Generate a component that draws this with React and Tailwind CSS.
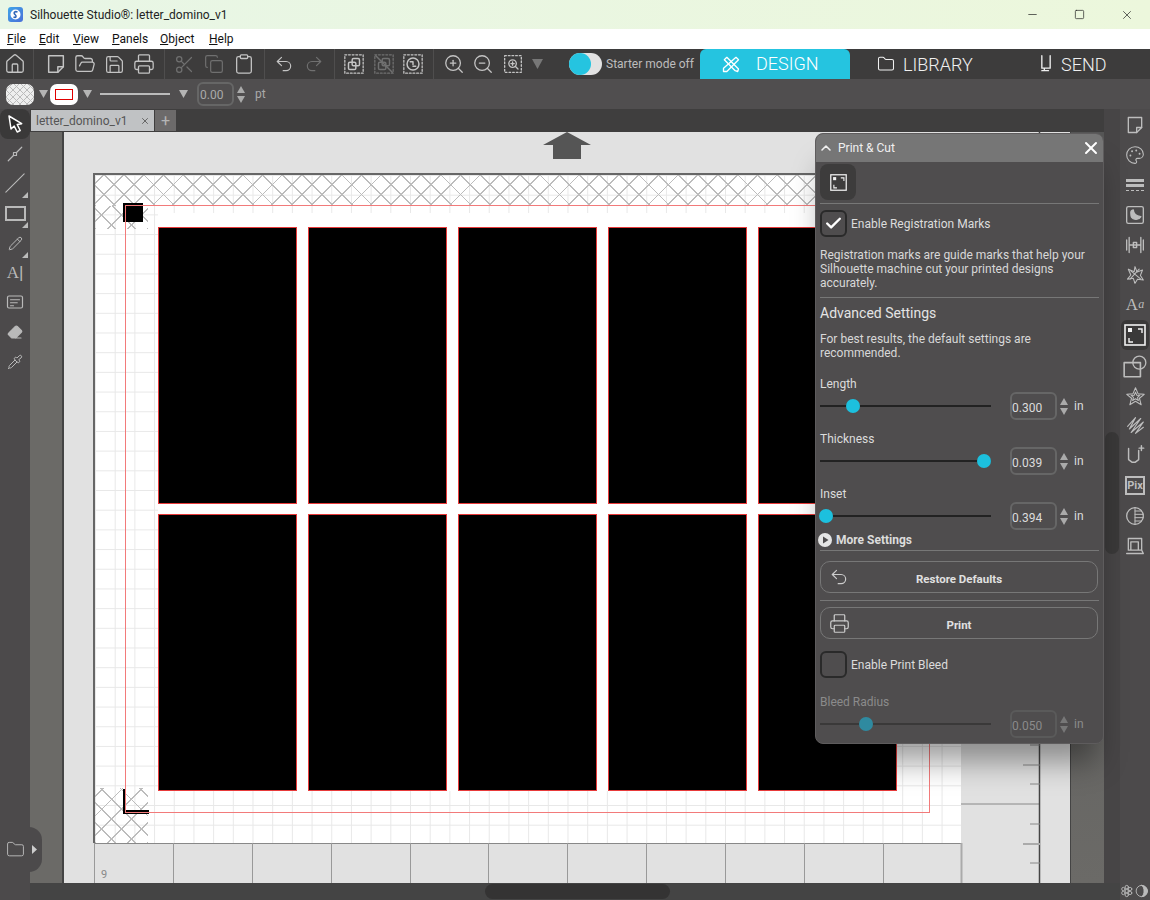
import {
  House, FolderOpen, Save, Printer, Scissors, Copy, Clipboard, Undo2, Redo2, ZoomIn, ZoomOut,
  Folder, Palette, Check, X, ChevronUp, Minus, Square, Eraser, Pipette, Pencil,
} from 'lucide-react';

const MENU = [
  ['F', 'ile', 'w-[32px]'],
  ['E', 'dit', 'w-[34px]'],
  ['V', 'iew', 'w-[39px]'],
  ['P', 'anels', 'w-[48px]'],
  ['O', 'bject', 'w-[49px]'],
  ['H', 'elp', 'w-[40px]'],
];

const CARDS = Array.from({ length: 10 }, (_, i) => i);

function Svg({ children, size = 22, className = '' }) {
  return (
    <svg viewBox="0 0 24 24" width={size} height={size} fill="none" stroke="currentColor" strokeWidth="1.6" strokeLinecap="round" strokeLinejoin="round" className={className}>
      {children}
    </svg>
  );
}

function TriDown({ className = '' }) {
  return (
    <svg width="9" height="8" viewBox="0 0 9 8" className={className}>
      <path d="M0 0h9L4.5 8z" fill="currentColor" />
    </svg>
  );
}

function Spinner({ dim }) {
  return (
    <div className={`flex flex-col gap-[3px] items-center w-[8px] ${dim ? 'text-[#777]' : 'text-[#aaa]'}`}>
      <svg width="8" height="7" viewBox="0 0 8 7"><path d="M0 7h8L4 0z" fill="currentColor" /></svg>
      <svg width="8" height="7" viewBox="0 0 8 7"><path d="M0 0h8L4 7z" fill="currentColor" /></svg>
    </div>
  );
}

function Corner() {
  return <span className="absolute right-0 bottom-0 w-0 h-0 border-l-[6px] border-l-transparent border-b-[6px] border-b-[#bbb]" />;
}

function NewPage({ size = 22 }) {
  return (
    <Svg size={size}>
      <path d="M4 3h16v12l-6 6H4z" />
      <path d="M14 21v-6h6" />
    </Svg>
  );
}

function GroupIcon({ off, round }) {
  return (
    <Svg>
      <rect x="2" y="2" width="20" height="20" strokeDasharray="2 2" strokeWidth="1.4" />
      {round ? (
        <>
          <circle cx="12" cy="12" r="6.5" />
          <path d="M9 9.5h3v3M15 14.5h-3" />
        </>
      ) : (
        <>
          <rect x="10" y="6" width="8" height="8" rx="1.5" />
          <rect x="6" y="10" width="8" height="8" rx="1.5" />
        </>
      )}
      {off && <path d="M3 3l18 18" />}
    </Svg>
  );
}

function ZoomSel() {
  return (
    <Svg size={20}>
      <rect x="2" y="2" width="20" height="20" strokeDasharray="2 2.4" strokeWidth="1.6" />
      <circle cx="11.5" cy="11.5" r="4.5" />
      <path d="M15 15l3 3M9.5 11.5h4M11.5 9.5v4" />
    </Svg>
  );
}

function RegIcon({ size = 22 }) {
  return (
    <svg width={size} height={size} viewBox="0 0 22 22">
      <rect x="1" y="1" width="20" height="20" fill="none" stroke="#f2f2f2" strokeWidth="1.6" />
      <rect x="4" y="4" width="4" height="4" fill="#f2f2f2" />
      <path d="M14 5h4v4M5 14v4h4" fill="none" stroke="#f2f2f2" strokeWidth="1.4" />
    </svg>
  );
}

function TopBtn({ children, dim }) {
  return <div className={`w-[29.5px] h-full flex items-center justify-center ${dim ? 'text-[#707070]' : 'text-[#c4c4c4]'}`}>{children}</div>;
}

function Sep() {
  return <div className="w-px h-full bg-[#4f4e4e] mx-[5px]" />;
}

function TopToolbar() {
  return (
    <div className="h-[30px] bg-[#3d3c3c] flex items-stretch">
      <div className="w-[30px] flex items-center justify-center text-[#c4c4c4]"><House size={22} strokeWidth={1.4} /></div>
      <div className="w-px bg-[#4f4e4e] ml-[3px] mr-[7px]" />
      <TopBtn><NewPage /></TopBtn>
      <TopBtn><FolderOpen size={22} strokeWidth={1.4} /></TopBtn>
      <TopBtn><Save size={21} strokeWidth={1.4} /></TopBtn>
      <TopBtn><Printer size={22} strokeWidth={1.4} /></TopBtn>
      <Sep />
      <TopBtn dim><Scissors size={21} strokeWidth={1.4} /></TopBtn>
      <TopBtn dim><Copy size={20} strokeWidth={1.4} /></TopBtn>
      <TopBtn><Clipboard size={22} strokeWidth={1.4} /></TopBtn>
      <Sep />
      <TopBtn><Undo2 size={20} strokeWidth={1.4} /></TopBtn>
      <TopBtn dim><Redo2 size={20} strokeWidth={1.4} /></TopBtn>
      <Sep />
      <TopBtn><GroupIcon /></TopBtn>
      <TopBtn dim><GroupIcon off /></TopBtn>
      <TopBtn><GroupIcon round /></TopBtn>
      <Sep />
      <TopBtn><ZoomIn size={22} strokeWidth={1.4} /></TopBtn>
      <TopBtn><ZoomOut size={22} strokeWidth={1.4} /></TopBtn>
      <TopBtn><ZoomSel /></TopBtn>
      <div className="flex items-center ml-[4px] text-[#777]">
        <svg width="11" height="10" viewBox="0 0 11 10"><path d="M0 0h11L5.500 10z" fill="currentColor" /></svg>
      </div>
      <div className="ml-[26.5px] flex items-center">
        <div className="w-[33px] h-[22px] rounded-full bg-[#e2e2e2]">
          <div className="w-[22px] h-[22px] rounded-full bg-[#25c4e0]" />
        </div>
        <span className="ml-[4px] w-[94px] text-[12px] text-[#bdbdbd] whitespace-nowrap">Starter mode off</span>
      </div>
      <div className="w-[150px] bg-[#25c4e0] rounded-t-[6px] flex items-center text-white pl-[21px] text-[18px] leading-none font-light">
        <Svg size={20} className="mr-[14px]">
          <path d="M4 7l3-3 14 14-1 3-3-1z" />
          <path d="M18 4l3 3L7 21l-4 0 0-4z" />
        </Svg>
        <span className="ml-px">DESIGN</span>
      </div>
      <div className="w-[170px] flex items-center text-[#f0f0f0] pl-[27px] text-[18px] font-light">
        <Folder size={18} strokeWidth={1.4} className="mr-[8px]" />
        <span>LIBRARY</span>
      </div>
      <div className="flex items-center text-[#f0f0f0] pl-[16px] text-[18px] font-light">
        <Svg size={20} className="mr-[5px]">
          <path d="M7 2v15h10V2M7 20h8M10 17v3" />
        </Svg>
        <span>SEND</span>
      </div>
    </div>
  );
}

function OptionBar() {
  return (
    <div className="h-[30px] bg-[#504e4f] flex items-center text-[#b5b5b5]">
      <div className="ml-[6px] w-[28px] h-[21px] rounded-[7px] bg-[#eee] bg-[repeating-linear-gradient(45deg,#bbb_0_1px,transparent_1px_5px),repeating-linear-gradient(-45deg,#bbb_0_1px,transparent_1px_5px)]" />
      <TriDown className="ml-[5px]" />
      <div className="ml-[2px] w-[28px] h-[21px] rounded-[7px] bg-white flex items-center justify-center">
        <div className="w-[18px] h-[11px] border border-[#e00000]" />
      </div>
      <TriDown className="ml-[5px]" />
      <div className="ml-[8px] w-[70px] h-[2px] bg-[#bbb]" />
      <TriDown className="ml-[9px]" />
      <div className="ml-[9px] w-[37px] h-[24px] border-2 border-[#666] rounded-md flex items-center pl-[1px] pt-px text-[12px] text-[#aaa]">0.00</div>
      <div className="ml-[3px]"><Spinner /></div>
      <span className="ml-[10px] text-[12px] text-[#aaa]">pt</span>
    </div>
  );
}

function LeftRail() {
  return (
    <div className="w-[30px] bg-[#4c4a4b] flex flex-col items-center text-[#b9b9b9] relative z-10">
      <div className="w-[30px] h-[30px] rounded-lg bg-[#3a3939] flex items-center justify-center text-white">
        <svg width="18" height="20" viewBox="0 0 18 20">
          <path d="M3 2l2 13 3.200-3 3 6 3-1.500-3-6 4.500-.8z" fill="#2a2a2a" stroke="#fff" strokeWidth="1.500" strokeLinejoin="round" />
        </svg>
      </div>
      <div className="h-[29px] flex items-center">
        <Svg size={18}>
          <path d="M3 21L10 14M14 10l7-7" />
          <rect x="10" y="10" width="4" height="4" />
        </Svg>
      </div>
      <div className="h-[30px] w-[26px] flex items-center justify-center relative">
        <Svg size={22} className="stroke-[1.2]"><path d="M2 22L22 2" /></Svg>
        <Corner />
      </div>
      <div className="h-[30px] w-[26px] flex items-center justify-center relative">
        <div className="w-[21px] h-[15px] border-2 border-[#b9b9b9]" />
        <Corner />
      </div>
      <div className="h-[30px] w-[26px] flex items-center justify-center relative">
        <Pencil size={15} strokeWidth={1.6} />
        <Corner />
      </div>
      <div className="h-[28px] flex items-center font-['Liberation_Serif',serif] text-[17px] leading-none">A<span className="font-['Liberation_Sans',sans-serif] font-light">|</span></div>
      <div className="h-[31px] flex items-center">
        <Svg size={18}>
          <rect x="2" y="4" width="20" height="16" rx="2" />
          <path d="M6 9h12M6 13h9M6 17h4" />
        </Svg>
      </div>
      <div className="h-[29px] flex items-center"><Eraser size={16} strokeWidth={1.8} fill="#b9b9b9" /></div>
      <div className="h-[31px] flex items-center"><Pipette size={16} strokeWidth={1.5} /></div>
      <div className="flex-1" />
      <div className="mb-[28px] relative w-[30px] h-[45px] flex items-center">
        <div className="absolute left-[29px] top-0 w-[13px] h-[45px] rounded-r-full bg-[#4c4a4b]" />
        <Folder size={19} strokeWidth={1.2} className="ml-[6px] relative" />
        <svg width="5" height="9" viewBox="0 0 5 9" className="absolute left-[32px] top-[18px]"><path d="M0 0l5 4.500L0 9z" fill="#ccc" /></svg>
      </div>
    </div>
  );
}

function RightRail() {
  return (
    <div className="w-[30px] bg-[#4c4a4b] flex flex-col items-center text-[#bdbdbd] pt-px">
      <div className="h-[30px] flex items-center"><NewPage size={20} /></div>
      <div className="h-[30px] flex items-center"><Palette size={20} strokeWidth={1.3} /></div>
      <div className="h-[30px] flex items-center flex-col justify-center gap-[2px] w-[18px]">
        <div className="w-full h-[3px] bg-[#bdbdbd]" />
        <div className="w-full h-[3px] bg-[#bdbdbd]" />
        <div className="w-full h-0 border-t border-dashed border-[#bdbdbd] mt-[1px]" />
      </div>
      <div className="h-[30px] flex items-center">
        <Svg size={20}>
          <rect x="2" y="2" width="20" height="20" rx="2" />
          <path d="M7 9c0-2 2-3 3-3 0 4 3 7 9 8-2 4-9 4-11 1-1-2-1-4-1-6z" fill="currentColor" />
        </Svg>
      </div>
      <div className="h-[30px] flex items-center">
        <Svg size={20}>
          <path d="M5 3v18M19 3v18M2 6v12M22 6v12M5 12h14" />
          <rect x="10" y="9" width="4" height="6" />
        </Svg>
      </div>
      <div className="h-[30px] flex items-center">
        <Svg size={20} className="stroke-[1.3]">
          <path d="M12 2l2.500 6.500L21 6l-2.500 6.500L22 18l-7-1-3 5-2-6-7 1 4-5-3-7 7 3z" />
          <path d="M7 7l12 10M17 5L6 17" />
        </Svg>
      </div>
      <div className="h-[30px] flex items-center font-['Liberation_Serif',serif] text-[17px] leading-none pb-[2px]">A<span className="text-[12px] italic">a</span></div>
      <div className="h-[30px] w-[28px] rounded-md bg-[#3a3939] flex items-center justify-center"><RegIcon /></div>
      <div className="h-[30px] flex items-center mt-[2px]">
        <Svg size={26}>
          <rect x="2" y="8" width="15" height="13" strokeWidth="1.500" />
          <circle cx="16" cy="8" r="6" strokeWidth="1.200" />
        </Svg>
      </div>
      <div className="h-[28px] flex items-center">
        <Svg size={21} className="stroke-[1.2]">
          <path d="M12 2l3 7 7 .500-5.500 4.500 2 7.500L12 17.500 5.500 21.500l2-7.500L2 9.500 9 9z" />
          <path d="M12 7l1.500 3.500 3.500.3-2.700 2.200 1 3.500-3.300-2-3.300 2 1-3.500-2.700-2.200 3.500-.3z" />
        </Svg>
      </div>
      <div className="h-[30px] flex items-center">
        <Svg size={21} className="stroke-[1.3]"><path d="M3 13L12 3 5 16 18 4 7 20 21 8 12 21 21 14" /></Svg>
      </div>
      <div className="h-[30px] flex items-center">
        <Svg size={22}>
          <path d="M5 5v12l4 3h3l4-3V7M19 2v5M16.500 4.500h5" />
        </Svg>
      </div>
      <div className="h-[30px] flex items-center">
        <div className="w-[20px] h-[19px] border-2 border-[#bdbdbd] flex items-center justify-center text-[11px] font-bold leading-none">Pix</div>
      </div>
      <div className="h-[31px] flex items-center">
        <Svg size={20}>
          <circle cx="12" cy="12" r="10" />
          <path d="M12 2v20M12 6h8M12 10h10M12 14h10M12 18h8" strokeWidth="1.200" />
        </Svg>
      </div>
      <div className="h-[29px] flex items-center">
        <Svg size={20}>
          <path d="M4 3h16v14H4zM2 21h20l-2-4M7 7h9v10M7 7v10" />
        </Svg>
      </div>
      <div className="flex-1" />
      <div className="h-[18px] w-[30px] flex items-center justify-end gap-[1px] pr-[2px] text-[#bbb] text-[14px] leading-none">
        <Svg size={14}>
          <circle cx="12" cy="12" r="3" />
          <circle cx="12" cy="5" r="3" />
          <circle cx="12" cy="19" r="3" />
          <circle cx="6" cy="8.500" r="3" />
          <circle cx="18" cy="8.500" r="3" />
          <circle cx="6" cy="15.500" r="3" />
          <circle cx="18" cy="15.500" r="3" />
        </Svg>
        <Svg size={14}>
          <circle cx="12" cy="12" r="10" />
          <path d="M12 2a10 10 0 0 1 0 20c3-2 4-6 4-10s-1-8-4-10z" fill="currentColor" />
        </Svg>
      </div>
    </div>
  );
}

function Divider() {
  return <div className="h-px w-[279px] bg-[#777]" />;
}

function Checkbox({ checked, label }) {
  return (
    <div className="flex items-center h-[27px]">
      <div className="w-[27px] h-[27px] border-2 border-[#2a2a2a] rounded-md flex items-center justify-center">
        {checked && <Check size={19} strokeWidth={3} className="text-white" />}
      </div>
      <span className="ml-[4px] text-[#dcdcdc]">{label}</span>
    </div>
  );
}

function SliderRow({ label, value, pos, dim }) {
  return (
    <div className={dim ? 'text-[#8b8b8b]' : 'text-[#dcdcdc]'}>
      <div className="h-[15px] leading-[15px]">{label}</div>
      <div className="h-[28px] flex items-center">
        <div className={`w-[171px] h-[2px] relative ${dim ? 'bg-[#3a3939]' : 'bg-[#222]'}`}>
          <div className={`absolute top-[-6px] w-[14px] h-[14px] rounded-full ${dim ? 'bg-[#2f8aa0]' : 'bg-[#1cc0de]'}`} style={{ left: pos - 7 }} />
        </div>
        <div className={`ml-[19px] w-[47px] h-[28px] border-2 rounded-md flex items-center pt-[3px] ${dim ? 'border-[#5a5a5a]' : 'border-[#666]'}`}>{value}</div>
        <div className="ml-[3px]"><Spinner dim={dim} /></div>
        <span className="ml-[6px]">in</span>
      </div>
    </div>
  );
}

function PanelButton({ icon, label }) {
  return (
    <div className="w-[278px] h-[32px] border border-[#777] rounded-[10px] flex items-center relative justify-center pt-[3px] font-bold text-[#e0e0e0] text-[11.5px]">
      <span className="absolute left-[8px] top-[5px] text-[#ccc]">{icon}</span>
      {label}
    </div>
  );
}

function PrintCutPanel() {
  return (
    <div className="absolute left-[785px] top-px w-[289px] h-[611px] rounded-lg bg-[#4f4d4e] border border-[#5e5c5d] shadow-[0_26px_28px_-8px_rgba(0,0,0,0.38)] text-[12px] leading-[14px] overflow-hidden">
      <div className="h-[28px] bg-[#767676] flex items-center text-[#f0f0f0]">
        <ChevronUp size={16} strokeWidth={2.4} className="ml-[2px]" />
        <span className="ml-[4px]">Print &amp; Cut</span>
        <X size={20} strokeWidth={2.4} className="ml-auto mr-[2px] text-white" />
      </div>
      <div className="pl-[4px]">
        <div className="mt-[2px] w-[36px] h-[36px] rounded-lg bg-[#3d3c3c] flex items-center justify-center"><RegIcon size={17} /></div>
        <div className="mt-[3px]"><Divider /></div>
        <div className="mt-[6px]"><Checkbox checked label="Enable Registration Marks" /></div>
        <p className="mt-[11px] w-[279px] text-[#d8d8d8]">
          Registration marks are guide marks that help your Silhouette machine cut your printed designs accurately.
        </p>
        <div className="mt-[7px]"><Divider /></div>
        <div className="mt-[5px] h-[20px] leading-[20px] text-[14px] text-[#e4e4e4]">Advanced Settings</div>
        <p className="mt-[9px] w-[279px] text-[#d8d8d8]">For best results, the default settings are recommended.</p>
        <div className="mt-[17px] flex flex-col gap-[12px]">
          <SliderRow label="Length" value="0.300" pos={33} />
          <SliderRow label="Thickness" value="0.039" pos={164} />
          <SliderRow label="Inset" value="0.394" pos={6} />
        </div>
        <div className="mt-[3px] h-[14px] flex items-center font-bold text-[#dcdcdc] ml-[-2px]">
          <svg width="14" height="14" viewBox="0 0 14 14" className="mr-[4px]">
            <circle cx="7" cy="7" r="7" fill="#e4e4e4" />
            <path d="M5 3.500v7l5.500-3.500z" fill="#4f4d4e" />
          </svg>
          More Settings
        </div>
        <div className="mt-[3px]"><Divider /></div>
        <div className="mt-[10px]">
          <PanelButton label="Restore Defaults" icon={<Undo2 size={20} strokeWidth={1.4} />} />
        </div>
        <div className="mt-[7px]"><Divider /></div>
        <div className="mt-[6px]">
          <PanelButton label="Print" icon={<Printer size={21} strokeWidth={1.4} />} />
        </div>
        <div className="mt-[12px]"><Checkbox label="Enable Print Bleed" /></div>
        <div className="mt-[17px]"><SliderRow dim label="Bleed Radius" value="0.050" pos={46} /></div>
      </div>
    </div>
  );
}

function Mat() {
  return (
    <div className="absolute left-[29px] top-[41px] w-[868px] h-[670px] border-l-2 border-t-2 border-[#666] bg-white bg-[linear-gradient(#e8e8e8_1.4px,transparent_1.4px),linear-gradient(90deg,#e8e8e8_1.4px,transparent_1.4px)] bg-size-[19.7px_19.7px] overflow-hidden">
      {/* no-cut hatch along the top and in the two corners */}
      <div className="absolute left-0 top-0 w-[731px] h-[31px] bg-[repeating-linear-gradient(45deg,#bcbcbc_0_1.2px,transparent_1.2px_14px),repeating-linear-gradient(-45deg,#bcbcbc_0_1.2px,transparent_1.2px_14px)]" />
      <div className="absolute left-0 top-[31px] w-[53px] h-[23px] bg-[repeating-linear-gradient(45deg,#bcbcbc_0_1.2px,transparent_1.2px_14px),repeating-linear-gradient(-45deg,#bcbcbc_0_1.2px,transparent_1.2px_14px)]" />
      <div className="absolute left-0 bottom-0 w-[53px] h-[55px] bg-[repeating-linear-gradient(45deg,#bcbcbc_0_1.2px,transparent_1.2px_14px),repeating-linear-gradient(-45deg,#bcbcbc_0_1.2px,transparent_1.2px_14px)]" />

      <div className="absolute left-[63px] top-[38px] w-[739px] bg-white pt-[14px]">
        <div className="grid grid-cols-[repeat(5,139px)] gap-x-[11px] gap-y-[10px]">
          {CARDS.map((i) => (
            <div key={i} className="h-[277px] bg-black border border-[#e83a3a]" />
          ))}
        </div>
      </div>

      {/* registration marks */}
      <div className="absolute left-[28px] top-[28px] w-[20px] h-[19px] bg-black" />
      <div className="absolute left-[28px] top-[614px] w-[3px] h-[25px] bg-black" />
      <div className="absolute left-[28px] top-[635px] w-[26px] h-[4px] bg-black" />
      <div className="absolute left-[30px] top-[30px] w-[805px] h-[608px] border border-[#f27a7a]" />
    </div>
  );
}

function Stage() {
  return (
    <div className="flex-1 relative bg-[#e1e1e1] border-r border-[#444] overflow-hidden">
      <svg width="48" height="28" viewBox="0 0 48 28" className="absolute left-[479px] top-0 text-[#555]">
        <path d="M24 0L48 13H38v14H10V13H0z" fill="currentColor" />
      </svg>
      <Mat />
      {/* rulers */}
      <svg width="1007" height="751" className="absolute left-0 top-0">
        <path d="M30 711.500h867" stroke="#888" strokeWidth="1" />
        <path d="M897 672h78" stroke="#888" strokeWidth="1" />
        <path d="M975.500 0v751" stroke="#444" strokeWidth="1.500" />
        <path d="M966 613h10M959 633h17M966 652h10M966 692h10M966 731h10" stroke="#888" strokeWidth="1" />
        <path d="M959 712h17" stroke="#aaa" strokeWidth="2" />
        <path d="M30.500 711v40M109.500 711v40M188.500 711v40M267.500 711v40M346.500 711v40M424.500 711v40M503.500 711v40M582.500 711v40M661.500 711v40M740.500 711v40M819.500 711v40" stroke="#999" strokeWidth="1" />
        <path d="M897.500 711v40" stroke="#aaa" strokeWidth="2" />
      </svg>
      <span className="absolute left-[37px] top-[737px] text-[11px] leading-none text-[#888]">9</span>
    </div>
  );
}

export default function App() {
  return (
    <div className="w-[1150px] h-[900px] overflow-hidden flex flex-col bg-[#4c4a4b] font-['Roboto',sans-serif] relative">
      <div className="h-[29px] flex items-center bg-[linear-gradient(90deg,#e8f6e6,#ecf7dc)] text-[#222]">
        <div className="ml-[8px] w-[15px] h-[15px] rounded-[3px] bg-[linear-gradient(135deg,#3fa5e8,#4a6fd8)] flex items-center justify-center">
          <svg width="11" height="11" viewBox="0 0 11 11">
            <circle cx="5.500" cy="5.500" r="5" fill="#fff" />
            <path d="M7.500 3C5 2 3 3.500 5 5.500S6 9 3.500 8" fill="none" stroke="#2f66b8" strokeWidth="1.600" />
          </svg>
        </div>
        <span className="ml-[7px] text-[12px]">Silhouette Studio®: letter_domino_v1</span>
        <div className="ml-auto flex items-center text-[#222]">
          <Minus size={13} strokeWidth={1.3} className="mr-[35px]" />
          <Square size={11} strokeWidth={1.5} className="mr-[35px]" />
          <X size={14} strokeWidth={1.2} className="mr-[16px]" />
        </div>
      </div>
      <div className="h-[20px] bg-white flex items-center pl-[7px] text-[12px] text-[#111]">
        {MENU.map(([key, rest, w]) => (
          <div key={key} className={w}><span className="underline">{key}</span>{rest}</div>
        ))}
      </div>
      <TopToolbar />
      <OptionBar />
      <div className="flex-1 flex min-h-0">
        <LeftRail />
        <div className="flex-1 flex flex-col min-w-0">
          <div className="flex-1 flex min-h-0">
            <div className="flex-1 flex flex-col min-w-0">
              <div className="h-[23px] bg-[#3f3e3e] flex items-center pl-px gap-px shrink-0">
                <div className="w-[123px] h-[21px] bg-[#c0c2c4] flex items-center pl-[5px] text-[12px] text-[#555]">
                  letter_domino_v1
                  <X size={10} strokeWidth={2.4} className="ml-auto mr-[4px] text-[#666]" />
                </div>
                <div className="w-[21px] h-[21px] bg-[#6c6a6a] flex items-center justify-center text-[#b5b5b5] text-[16px] leading-none">+</div>
              </div>
              <div className="flex-1 flex relative min-h-0">
                <div className="w-[32px] bg-[#6b6a67] border-r-2 border-[#444] box-content" />
                <Stage />
                <div className="w-[33px] bg-[linear-gradient(#555,#6b6a67)]" />
                <PrintCutPanel />
              </div>
            </div>
            <div className="w-[16px] bg-[#474546] pt-[323px] px-px">
              <div className="h-[122px] rounded-full bg-[#3a3939]" />
            </div>
          </div>
          <div className="h-[17px] bg-[#444] pl-[455px] pt-px">
            <div className="w-[185px] h-[15px] rounded-full bg-[#343333]" />
          </div>
        </div>
        <RightRail />
      </div>
    </div>
  );
}
